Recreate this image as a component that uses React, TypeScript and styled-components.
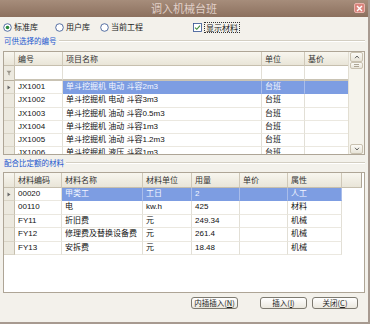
import React from 'react';
import styled, { createGlobalStyle } from 'styled-components';

const GlobalStyle = createGlobalStyle`
  html, body {
    margin: 0;
    padding: 0;
    background: #f3f1eb;
  }
  body {
    font-family: 'Liberation Sans', 'Noto Sans CJK SC', sans-serif;
    font-size: 8px;
    color: #111;
  }
`;

const Window = styled.div`
  width: 370px;
  height: 324px;
  box-sizing: border-box;
  display: flex;
  flex-direction: column;
  background: #f3f1eb;
  border-right: 2px solid #a79a90;
  border-bottom: 2px solid #a79a90;
  overflow: hidden;
`;

const TitleBar = styled.div`
  height: 17px;
  flex: none;
  display: flex;
  align-items: center;
  justify-content: center;
  position: relative;
  background: linear-gradient(#a68d7b, #8c705e);
`;

const Title = styled.span`
  font-family: 'Noto Sans CJK SC', sans-serif;
  font-size: 11px;
  line-height: 17px;
  color: rgba(255, 240, 236, 0.72);
`;

const CloseButton = styled.div`
  position: absolute;
  right: 3px;
  top: 3px;
  width: 11px;
  height: 10px;
  box-sizing: border-box;
  border: 1px solid #eab4ad;
  border-radius: 2px;
  background: #d9837b;
  display: flex;
  align-items: center;
  justify-content: center;
`;

const Body = styled.div`
  flex: 1;
  display: flex;
  flex-direction: column;
  padding: 0 3px;
`;

const OptionRow = styled.div`
  margin-top: 3px;
  height: 14px;
  display: flex;
  align-items: center;
`;

const OptionItem = styled.label<{ w: number }>`
  width: ${(p) => p.w}px;
  display: flex;
  align-items: center;
  gap: 2px;
  font-family: 'Noto Sans CJK SC', sans-serif;
  font-size: 8px;
  line-height: 10px;
  color: #222;
`;

const FocusLabel = styled.span`
  border: 1px dotted #333;
  padding: 0 1px;
  line-height: 9px;
`;

const GroupHeader = styled.div<{ top: number }>`
  margin-top: ${(p) => p.top}px;
  height: 10px;
  display: flex;
  align-items: center;
  gap: 2px;
`;

const Legend = styled.span`
  font-family: 'Noto Sans CJK SC', sans-serif;
  font-size: 7.5px;
  line-height: 10px;
  color: #2458cf;
  padding-left: 1px;
`;

const Rule = styled.div`
  flex: 1;
  height: 0;
  border-top: 1px solid #d3cec2;
  border-bottom: 1px solid #fff;
`;

const Grid = styled.div<{ h: number; top: number }>`
  margin-top: ${(p) => p.top}px;
  height: ${(p) => p.h}px;
  box-sizing: border-box;
  border: 1px solid #aea596;
  background: #fff;
  display: flex;
  overflow: hidden;
`;

const GridBody = styled.div`
  flex: 1;
  display: flex;
  flex-direction: column;
  min-width: 0;
`;

const Row = styled.div<{ cols: string; h: number }>`
  display: grid;
  grid-template-columns: ${(p) => p.cols};
  height: ${(p) => p.h}px;
  flex: none;
`;

const HeadCell = styled.div<{ last?: boolean }>`
  box-sizing: border-box;
  background: linear-gradient(#f8f6ef, #e9e5d8);
  border-right: 1px solid ${(p) => (p.last ? '#aea596' : '#cfc8b8')};
  border-bottom: 1px solid #c6bfae;
  padding-left: 3px;
  font-family: 'Noto Sans CJK SC', sans-serif;
  font-size: 8px;
  line-height: 14px;
  color: #333;
  white-space: nowrap;
  overflow: hidden;
`;

const Indicator = styled.div<{ sep?: boolean }>`
  box-sizing: border-box;
  background: #ece9df;
  border-right: 1px solid #c6bfae;
  border-bottom: 1px solid ${(p) => (p.sep ? '#b8b09f' : '#d9d4c6')};
  display: flex;
  align-items: center;
  justify-content: center;
`;

const FilterCell = styled.div`
  box-sizing: border-box;
  border-right: 1px solid #e2dfd6;
  border-bottom: 2px solid #c9c3b4;
  background: #fff;
`;

const Cell = styled.div<{ sel?: boolean }>`
  box-sizing: border-box;
  background: ${(p) => (p.sel ? '#7d9de2' : '#fff')};
  color: ${(p) => (p.sel ? '#f4f7ff' : '#111')};
  border-right: 1px solid ${(p) => (p.sel ? '#a9bdea' : '#e2dfd6')};
  border-bottom: 1px solid ${(p) => (p.sel ? '#7d9de2' : '#ebe8e0')};
  padding-left: 3px;
  font-size: 8px;
  line-height: 12.5px;
  white-space: nowrap;
  overflow: hidden;
`;

const Spacer = styled.div`
  background: #fff;
`;

const Scrollbar = styled.div`
  width: 15px;
  flex: none;
  display: flex;
  flex-direction: column;
  background: #f5f3ec;
  border-left: 1px solid #e2ded2;
`;

const ScrollButton = styled.div<{ h: number }>`
  height: ${(p) => p.h}px;
  flex: none;
  box-sizing: border-box;
  margin: 0 1px;
  border: 1px solid #c9c1b0;
  border-radius: 2px;
  background: linear-gradient(#fbfaf6, #e8e4d8);
  display: flex;
  align-items: center;
  justify-content: center;
`;

const Track = styled.div`
  flex: 1;
`;

const ButtonBar = styled.div`
  margin-top: 4px;
  height: 12px;
  display: flex;
  justify-content: flex-end;
  padding-right: 7px;
`;

const DlgButton = styled.button<{ gap: number; w: number }>`
  margin-left: ${(p) => p.gap}px;
  width: ${(p) => p.w}px;
  height: 12px;
  padding: 0;
  border: 1px solid #7d7a70;
  border-radius: 3px;
  background: linear-gradient(#ffffff, #ebe8de);
  font-family: 'Noto Sans CJK SC', sans-serif;
  font-size: 7.5px;
  line-height: 10px;
  color: #222;
  u {
    text-decoration: underline;
  }
`;

const Radio = ({ on }: { on?: boolean }) => (
  <svg width="9" height="9" viewBox="0 0 9 9">
    <circle cx="4.5" cy="4.5" r="3.8" fill="#fff" stroke="#2f4f8f" strokeWidth="0.8" />
    {on && <circle cx="4.5" cy="4.5" r="1.8" fill="#2c8a3c" />}
  </svg>
);

const Check = () => (
  <svg width="9" height="9" viewBox="0 0 9 9">
    <rect x="0.5" y="0.5" width="8" height="8" fill="#fff" stroke="#2f4f8f" strokeWidth="0.8" />
    <path d="M2 4.6 L3.8 6.3 L7 2.6" fill="none" stroke="#3a8a3a" strokeWidth="1.1" />
  </svg>
);

const RowArrow = () => (
  <svg width="4" height="5" viewBox="0 0 4 5">
    <path d="M0.5 0.5 L3.5 2.5 L0.5 4.5 Z" fill="#666" />
  </svg>
);

const Funnel = () => (
  <svg width="6" height="6" viewBox="0 0 6 6">
    <path d="M0.5 0.8 H5.5 L3.6 3 V5.4 L2.4 4.8 V3 Z" fill="#9a958a" />
  </svg>
);

const Chevron = ({ up }: { up?: boolean }) => (
  <svg width="6" height="4" viewBox="0 0 6 4">
    <path d={up ? 'M1 3.2 L3 1 L5 3.2' : 'M1 0.8 L3 3 L5 0.8'} fill="none" stroke="#555" strokeWidth="0.9" />
  </svg>
);

const itemCols = '11px 48px 199px 43px 46px';
const materialCols = '11px 47px 81px 49px 48px 48px 54px 20px 1fr';

const items = [
  ['JX1001', '单斗挖掘机 电动 斗容2m3', '台班'],
  ['JX1002', '单斗挖掘机 电动 斗容3m3', '台班'],
  ['JX1003', '单斗挖掘机 油动 斗容0.5m3', '台班'],
  ['JX1004', '单斗挖掘机 油动 斗容1m3', '台班'],
  ['JX1005', '单斗挖掘机 油动 斗容1.2m3', '台班'],
  ['JX1006', '单斗挖掘机 液压 斗容1m3', '台班'],
];

const materials = [
  ['00020', '甲类工', '工日', '2', '', '人工'],
  ['00110', '电', 'kw.h', '425', '', '材料'],
  ['FY11', '折旧费', '元', '249.34', '', '机械'],
  ['FY12', '修理费及替换设备费', '元', '261.4', '', '机械'],
  ['FY13', '安拆费', '元', '18.48', '', '机械'],
];

export default function App() {
  return (
    <Window>
      <GlobalStyle />
      <TitleBar>
        <Title>调入机械台班</Title>
        <CloseButton>
          <svg width="7" height="7" viewBox="0 0 7 7">
            <path d="M1 1 L6 6 M6 1 L1 6" stroke="#fff" strokeWidth="1.4" />
          </svg>
        </CloseButton>
      </TitleBar>
      <Body>
        <OptionRow>
          <OptionItem w={52}>
            <Radio on />
            标准库
          </OptionItem>
          <OptionItem w={45}>
            <Radio />
            用户库
          </OptionItem>
          <OptionItem w={93}>
            <Radio />
            当前工程
          </OptionItem>
          <OptionItem w={60}>
            <Check />
            <FocusLabel>显示材料</FocusLabel>
          </OptionItem>
        </OptionRow>

        <GroupHeader top={2}>
          <Legend>可供选择的编号</Legend>
          <Rule />
        </GroupHeader>

        <Grid h={104} top={5}>
          <GridBody>
            <Row cols={itemCols} h={14}>
              <HeadCell />
              <HeadCell>编号</HeadCell>
              <HeadCell>项目名称</HeadCell>
              <HeadCell>单位</HeadCell>
              <HeadCell>基价</HeadCell>
            </Row>
            <Row cols={itemCols} h={15}>
              <Indicator sep>
                <Funnel />
              </Indicator>
              <FilterCell />
              <FilterCell />
              <FilterCell />
              <FilterCell />
            </Row>
            {items.map((it, i) => (
              <Row cols={itemCols} h={13.3} key={it[0]}>
                <Indicator>{i === 0 && <RowArrow />}</Indicator>
                <Cell>{it[0]}</Cell>
                <Cell sel={i === 0}>{it[1]}</Cell>
                <Cell sel={i === 0}>{it[2]}</Cell>
                <Cell sel={i === 0} />
              </Row>
            ))}
          </GridBody>
          <Scrollbar>
            <ScrollButton h={10}>
              <Chevron up />
            </ScrollButton>
            <ScrollButton h={7}>
              <svg width="5" height="3" viewBox="0 0 5 3">
                <path d="M0 0.5 H5 M0 2.5 H5" stroke="#9a9280" strokeWidth="0.8" />
              </svg>
            </ScrollButton>
            <Track />
            <ScrollButton h={10}>
              <Chevron />
            </ScrollButton>
          </Scrollbar>
        </Grid>

        <GroupHeader top={3}>
          <Legend>配合比定额的材料</Legend>
          <Rule />
        </GroupHeader>

        <Grid h={121} top={4}>
          <GridBody>
            <Row cols={materialCols} h={15}>
              <HeadCell />
              <HeadCell>材料编码</HeadCell>
              <HeadCell>材料名称</HeadCell>
              <HeadCell>材料单位</HeadCell>
              <HeadCell>用量</HeadCell>
              <HeadCell>单价</HeadCell>
              <HeadCell>属性</HeadCell>
              <HeadCell last />
              <Spacer />
            </Row>
            {materials.map((m, i) => (
              <Row cols={materialCols} h={13.4} key={m[0]}>
                <Indicator>{i === 0 && <RowArrow />}</Indicator>
                <Cell>{m[0]}</Cell>
                {m.slice(1).map((v, j) => (
                  <Cell sel={i === 0} key={j}>
                    {v}
                  </Cell>
                ))}
                <Spacer />
                <Spacer />
              </Row>
            ))}
          </GridBody>
        </Grid>

        <ButtonBar>
          <DlgButton gap={0} w={47}>
            内插插入(<u>N</u>)
          </DlgButton>
          <DlgButton gap={22} w={47}>
            插入(<u>I</u>)
          </DlgButton>
          <DlgButton gap={5} w={46}>
            关闭(<u>C</u>)
          </DlgButton>
        </ButtonBar>
      </Body>
    </Window>
  );
}
